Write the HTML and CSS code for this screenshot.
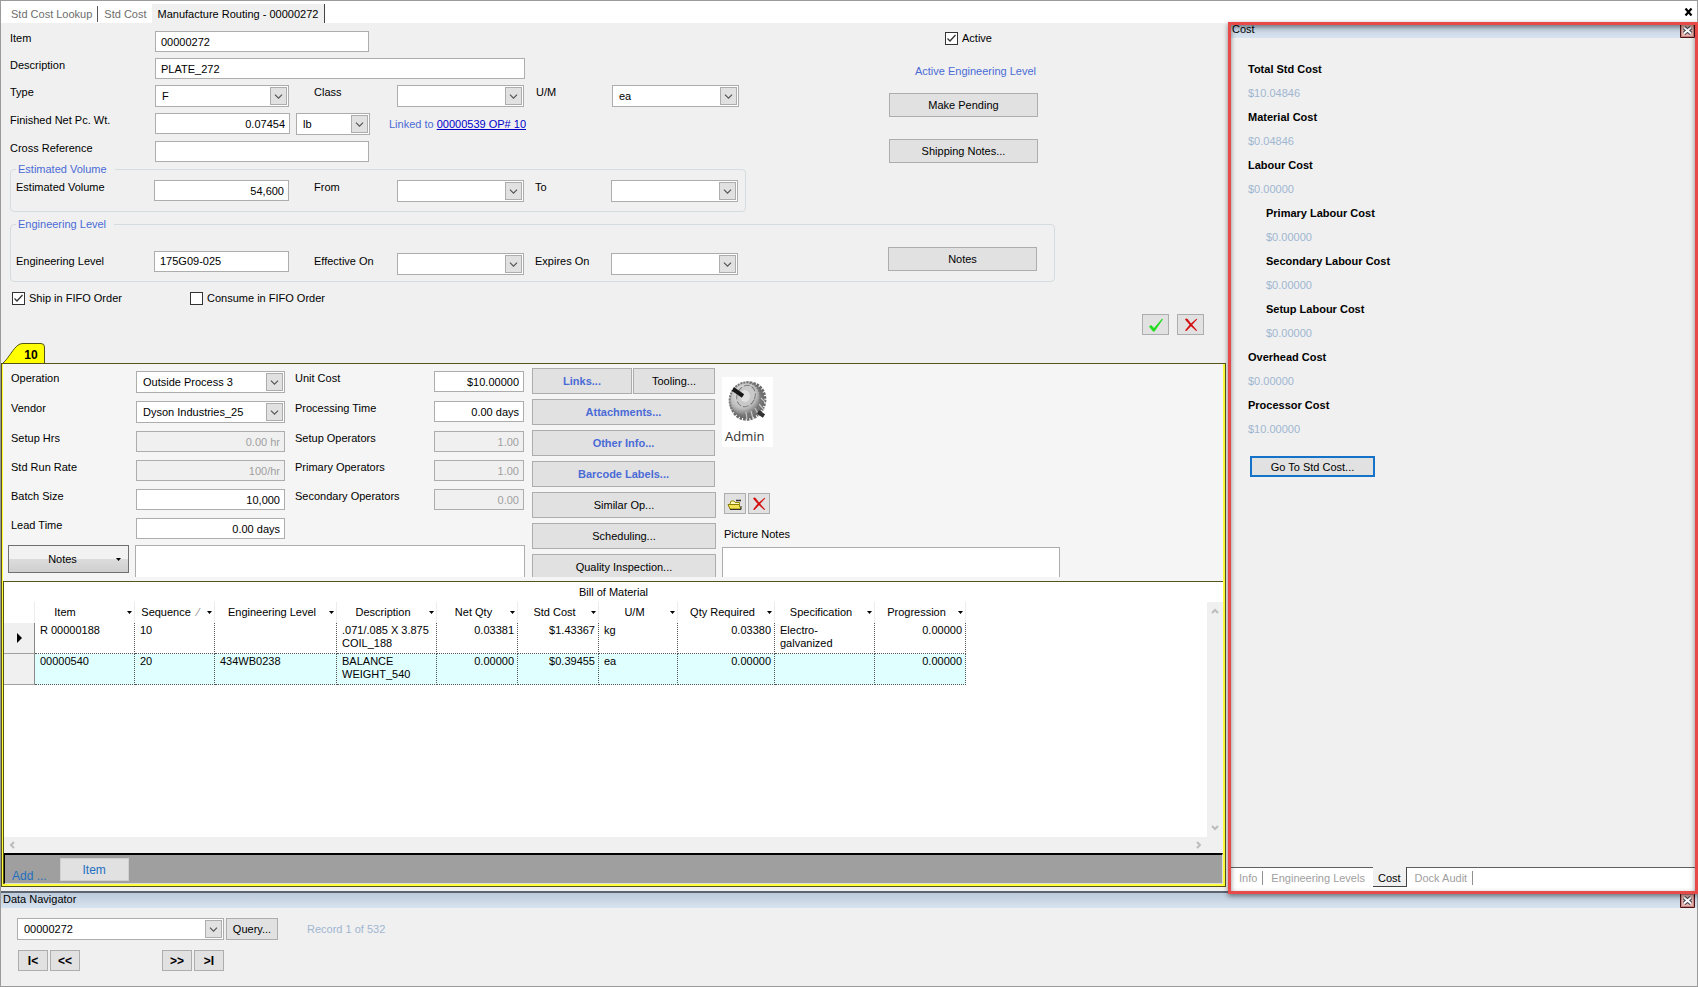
FILE: index.html
```html
<!DOCTYPE html>
<html lang="en">
<head>
<meta charset="utf-8">
<title>Manufacture Routing - 00000272</title>
<link rel="stylesheet" href="styles.css">
</head>
<body>
<svg class="defs" aria-hidden="true">
  <symbol id="chevron" viewBox="0 0 17 18"><path d="M4.500 7.500l4 4 4-4" fill="none" stroke="#505050" stroke-width="1.200"/></symbol>
  <symbol id="drop" viewBox="0 0 5 3"><path d="M0 0h5L2.500 3z" fill="#000"/></symbol>
  <symbol id="cross" viewBox="0 0 14 14"><path d="M1 1.500C2 .2 3 .3 4 1.500L7 5.500 12.500.8l.8.500L8.200 6.800l5 5.700-1 .5L7 8.200 2.500 13 1 12.500 5.600 6.800z" fill="#d40f0f"/></symbol>
  <symbol id="close" viewBox="0 0 15 15"><path d="M.5.5h14v14H.5z" fill="#e7b3ae" stroke="#4a1416"/><path d="M1.500 1.500h12v12h-12z" fill="none" stroke="#c9837e"/><path d="M4 4.500l7 6M11 4.500l-7 6" stroke="#3f4450" stroke-width="4.200"/><path d="M4 4.500l7 6M11 4.500l-7 6" stroke="#fff" stroke-width="2"/></symbol>
  <symbol id="scroll" viewBox="0 0 8 6"><path d="M1 5l3-3 3 3" fill="none" stroke="#bcbcbc" stroke-width="2"/></symbol>
</svg>
<div class="app">
  <header class="doc-tabs">
    <nav>
      <a href="#lookup">Std Cost Lookup</a>
      <a href="#std">Std Cost</a>
      <a href="#routing" class="current">Manufacture Routing - 00000272</a>
    </nav>
    <button class="doc-close" aria-label="Close"><svg width="9" height="8" viewBox="0 0 9 8"><path d="M1.500.5l6 7M7.500.5l-6 7" stroke="#000" stroke-width="2.200"/></svg></button>
  </header>

  <main class="workspace">
    <div class="routing">
      <form class="item-form">
        <div class="form-top">
          <div class="form-left">
            <div class="fields">
              <label for="item">Item</label><input id="item" class="w-mid" value="00000272">
              <label for="desc">Description</label><input id="desc" class="w-long" value="PLATE_272">
              <label for="type">Type</label><span class="combo w-type"><select id="type"><option>F</option></select><svg><use href="#chevron"/></svg></span>
              <label for="class">Class</label><span class="combo w-date"><select id="class"><option></option></select><svg><use href="#chevron"/></svg></span>
              <label for="um">U/M</label><span class="combo w-date"><select id="um"><option>ea</option></select><svg><use href="#chevron"/></svg></span>
              <label for="wt">Finished Net Pc. Wt.</label>
              <div class="weight"><input id="wt" class="num w-short" value="0.07454"><span class="combo w-unit"><select aria-label="Weight unit"><option>lb</option></select><svg><use href="#chevron"/></svg></span><span class="linked">Linked to <a href="#op">00000539 OP# 10</a></span></div>
              <label for="xref">Cross Reference</label><input id="xref" class="w-mid">
            </div>
            <fieldset class="volume">
              <legend>Estimated Volume</legend>
              <div class="group">
                <label for="vol">Estimated Volume</label><input id="vol" class="num w-short" value="54,600">
                <label for="from">From</label><span class="combo w-date"><select id="from"><option></option></select><svg><use href="#chevron"/></svg></span>
                <label for="to">To</label><span class="combo w-date"><select id="to"><option></option></select><svg><use href="#chevron"/></svg></span>
              </div>
            </fieldset>
          </div>
          <div class="form-actions">
            <label class="check centered"><input type="checkbox" checked>Active</label>
            <span class="level">Active Engineering Level</span>
            <button type="button">Make Pending</button>
            <button type="button">Shipping Notes...</button>
          </div>
        </div>
        <fieldset class="engineering">
          <legend>Engineering Level</legend>
          <div class="group">
            <label for="eng">Engineering Level</label><input id="eng" class="w-short" value="175G09-025">
            <label for="eff">Effective On</label><span class="combo w-date"><select id="eff"><option></option></select><svg><use href="#chevron"/></svg></span>
            <label for="exp">Expires On</label><span class="combo w-date"><select id="exp"><option></option></select><svg><use href="#chevron"/></svg></span>
            <button type="button">Notes</button>
          </div>
        </fieldset>
        <div class="fifo">
          <label class="check"><input type="checkbox" checked>Ship in FIFO Order</label>
          <label class="check"><input type="checkbox">Consume in FIFO Order</label>
        </div>
        <div class="confirm">
          <button type="button" aria-label="Save"><svg width="16" height="14" viewBox="0 0 16 14"><path d="M1 8.500l2-1.500L6 10 14 .8l1 .4L6.500 13.500H5z" fill="#1fdc1f"/></svg></button>
          <button type="button" aria-label="Cancel"><svg width="14" height="14"><use href="#cross"/></svg></button>
        </div>
      </form>

      <div class="op-tabs">
        <button class="op-tab"><svg width="42" height="20" viewBox="0 0 42 20"><path d="M0 20C6 15 10 5 16 1.500Q18 .5 20 .5h18Q41.500.5 41.500 4v16" fill="#ffff00" stroke="#55551a"/></svg><span>10</span></button>
      </div>

      <section class="op-panel">
        <div class="op-body">
          <div class="op-main">
            <div class="op-fields">
              <label for="op">Operation</label><span class="combo"><select id="op"><option>Outside Process 3</option></select><svg><use href="#chevron"/></svg></span>
              <label for="cost">Unit Cost</label><input id="cost" class="num" value="$10.00000">
              <label for="vendor">Vendor</label><span class="combo"><select id="vendor"><option>Dyson Industries_25</option></select><svg><use href="#chevron"/></svg></span>
              <label for="ptime">Processing Time</label><input id="ptime" class="num" value="0.00 days">
              <label for="setup">Setup Hrs</label><input id="setup" class="num" value="0.00 hr" disabled>
              <label for="sops">Setup Operators</label><input id="sops" class="num" value="1.00" disabled>
              <label for="rate">Std Run Rate</label><input id="rate" class="num" value="100/hr" disabled>
              <label for="pops">Primary Operators</label><input id="pops" class="num" value="1.00" disabled>
              <label for="batch">Batch Size</label><input id="batch" class="num" value="10,000">
              <label for="secops">Secondary Operators</label><input id="secops" class="num" value="0.00" disabled>
              <label for="lead">Lead Time</label><input id="lead" class="num" value="0.00 days">
            </div>
            <div class="op-notes">
              <button class="notes-btn"><span>Notes</span><svg width="5" height="3"><use href="#drop"/></svg></button>
              <textarea aria-label="Notes"></textarea>
            </div>
          </div>
          <div class="op-buttons">
            <div class="pair"><button class="strong">Links...</button><button>Tooling...</button></div>
            <button class="strong">Attachments...</button>
            <button class="strong">Other Info...</button>
            <button class="strong">Barcode Labels...</button>
            <button>Similar Op...</button>
            <button>Scheduling...</button>
            <button>Quality Inspection...</button>
          </div>
          <div class="op-picture">
            <figure>
              <svg width="45" height="46" viewBox="0 0 45 46">
                <defs><radialGradient id="metal" cx=".4" cy=".4" r=".7"><stop offset="0" stop-color="#f4f4f4"/><stop offset=".6" stop-color="#bdbdbd"/><stop offset="1" stop-color="#5a5a5a"/></radialGradient></defs>
                <ellipse cx="23" cy="23" rx="16" ry="18" fill="#777" stroke="#6a6a6a" stroke-width="4" stroke-dasharray="2.500 1" transform="rotate(25 23 23)"/>
                <ellipse cx="20" cy="21" rx="15" ry="17" fill="url(#metal)" stroke="#777" stroke-width="2" stroke-dasharray="2 1" transform="rotate(25 20 21)"/>
                <path d="M30 30l4 8M26 33l2 8M34 26l5 6M21 34l1 7M36 20l4 4" stroke="#c4c4c4" stroke-width="1.200"/>
                <ellipse cx="21" cy="18" rx="9" ry="11" fill="#c9c9c9" stroke="#7b7b7b" stroke-dasharray="6 2" transform="rotate(25 21 18)"/>
                <ellipse cx="20" cy="18" rx="5" ry="6" fill="#e0e0e0"/>
                <path d="M8 11l10 7" stroke="#171717" stroke-width="4"/><path d="M33 34l6 4" stroke="#333" stroke-width="4"/>
              </svg>
              <figcaption>Admin</figcaption>
            </figure>
            <div class="picture-tools">
              <button aria-label="Open picture"><svg width="16" height="14" viewBox="0 0 16 14"><path d="M3 7l1-3h3l1 1.500h4.500V8" fill="#fffbc0" stroke="#9a8a00"/><path d="M9 3.500h5" stroke="#333" stroke-width="1.500"/><path d="M1 7.500h11l2 4.500H3z" fill="#f3e254" stroke="#8a7c00"/><path d="M3 12.500h11V9" fill="none" stroke="#333"/></svg></button>
              <button aria-label="Delete picture"><svg width="14" height="14"><use href="#cross"/></svg></button>
            </div>
            <label for="pnotes">Picture Notes</label>
            <textarea id="pnotes"></textarea>
          </div>
        </div>

        <div class="bom">
          <h2>Bill of Material</h2>
          <div class="grid-area">
            <div class="grid-scroll">
              <table>
                <colgroup><col class="c-mark"><col class="c-100"><col class="c-80"><col class="c-122"><col class="c-100"><col class="c-81"><col class="c-81"><col class="c-79"><col class="c-97"><col class="c-100"><col class="c-91"></colgroup>
                <thead><tr>
                  <th class="mark"></th>
                  <th><div class="item-head"><span>Item</span><svg><use href="#drop"/></svg></div></th>
                  <th><div><span>Sequence</span><i>⁄</i><svg><use href="#drop"/></svg></div></th>
                  <th><div><span>Engineering Level</span><svg><use href="#drop"/></svg></div></th>
                  <th><div><span>Description</span><svg><use href="#drop"/></svg></div></th>
                  <th><div><span>Net Qty</span><svg><use href="#drop"/></svg></div></th>
                  <th><div><span>Std Cost</span><svg><use href="#drop"/></svg></div></th>
                  <th><div><span>U/M</span><svg><use href="#drop"/></svg></div></th>
                  <th><div><span>Qty Required</span><svg><use href="#drop"/></svg></div></th>
                  <th><div><span>Specification</span><svg><use href="#drop"/></svg></div></th>
                  <th><div><span>Progression</span><svg><use href="#drop"/></svg></div></th>
                </tr></thead>
                <tbody>
                  <tr><td class="mark"><svg width="5" height="10" viewBox="0 0 5 10"><path d="M0 0l5 5-5 5z"/></svg></td><td>R 00000188</td><td>10</td><td></td><td>.071/.085 X 3.875 COIL_188</td><td class="r">0.03381</td><td class="r">$1.43367</td><td>kg</td><td class="r">0.03380</td><td>Electro-<br>galvanized</td><td class="r">0.00000</td></tr>
                  <tr class="alt"><td class="mark"></td><td>00000540</td><td>20</td><td>434WB0238</td><td>BALANCE WEIGHT_540</td><td class="r">0.00000</td><td class="r">$0.39455</td><td>ea</td><td class="r">0.00000</td><td></td><td class="r">0.00000</td></tr>
                </tbody>
              </table>
            </div>
            <div class="vbar"><svg><use href="#scroll"/></svg><svg class="down"><use href="#scroll"/></svg></div>
            <div class="hbar"><svg class="left"><use href="#scroll"/></svg><svg class="right"><use href="#scroll"/></svg></div>
          </div>
          <div class="add-bar"><span>Add ...</span><button>Item</button></div>
        </div>
      </section>
    </div>

    <aside class="cost">
      <div class="title-bar"><span>Cost</span><button aria-label="Close Cost"><svg width="15" height="15"><use href="#close"/></svg></button></div>
      <div class="cost-body">
        <dl>
          <dt>Total Std Cost</dt><dd>$10.04846</dd>
          <dt>Material Cost</dt><dd>$0.04846</dd>
          <dt>Labour Cost</dt><dd>$0.00000</dd>
          <dt class="sub">Primary Labour Cost</dt><dd class="sub">$0.00000</dd>
          <dt class="sub">Secondary Labour Cost</dt><dd class="sub">$0.00000</dd>
          <dt class="sub">Setup Labour Cost</dt><dd class="sub">$0.00000</dd>
          <dt>Overhead Cost</dt><dd>$0.00000</dd>
          <dt>Processor Cost</dt><dd>$10.00000</dd>
        </dl>
        <button class="focus">Go To Std Cost...</button>
      </div>
      <nav class="side-tabs">
        <a href="#info">Info</a><a href="#levels" class="before">Engineering Levels</a><a href="#cost" class="current">Cost</a><a href="#dock">Dock Audit</a><span class="rest"></span>
      </nav>
      <div class="highlight"></div>
    </aside>
  </main>

  <footer class="navigator">
    <div class="title-bar"><span>Data Navigator</span><button aria-label="Close Data Navigator"><svg width="15" height="15"><use href="#close"/></svg></button></div>
    <div class="query">
      <span class="combo"><select aria-label="Record"><option>00000272</option></select><svg><use href="#chevron"/></svg></span>
      <button>Query...</button>
      <span class="record">Record 1 of 532</span>
    </div>
    <div class="steps">
      <div><button>I&lt;</button><button>&lt;&lt;</button></div>
      <div><button>&gt;&gt;</button><button>&gt;I</button></div>
    </div>
  </footer>
</div>
</body>
</html>
```
FILE: styles.css
```css
* { box-sizing: border-box; }
body { margin: 0; font: 11px/14px "Liberation Sans", Arial, sans-serif; color: #000; background: #f0f0f0; }
.defs { display: none; }
a { color: inherit; text-decoration: none; }
h2, dl, dd, figure { margin: 0; }
button, input, select, textarea { font: inherit; color: inherit; margin: 0; border-radius: 0; }
button { padding: 0; background: #e1e1e1; border: 1px solid #adadad; white-space: nowrap; }
button svg { display: block; margin: auto; }
input, textarea { border: 1px solid #adadad; background: #fff; height: 21px; padding: 0 5px; min-width: 0; }
textarea { resize: none; display: block; }
input:disabled { background: #f0f0f0; color: #a0a0a0; }
label { white-space: nowrap; }
.num { text-align: right; padding-right: 4px; }
.combo { display: grid; height: 22px; border: 1px solid #adadad; background: #fff; }
.combo > * { grid-area: 1 / 1; }
.combo select { appearance: none; border: 0; background: transparent; padding: 0 18px 0 6px; width: 100%; min-width: 0; }
.combo svg { width: 17px; height: 18px; margin: 1px; justify-self: end; background: #e1e1e1; border: 1px solid #adadad; pointer-events: none; }
.w-short { width: 135px; }
.w-type { width: 134px; }
.w-mid { width: 214px; }
.w-long { width: 370px; }
.w-date { width: 127px; }
.w-unit { width: 74px; }

.app { min-height: 100vh; display: flex; flex-direction: column; border: 1px solid #9b9b9b; }

/* document tabs */
.doc-tabs { display: flex; justify-content: space-between; align-items: center; height: 22px; background: #fff; color: #6d6d6d; }
.doc-tabs nav { display: flex; align-items: center; align-self: stretch; padding: 3px 0 0 4px; }
.doc-tabs a { padding: 1px 5px 1px 6px; }
.doc-tabs a:first-child { border-right: 1px solid #555; }
.doc-tabs a.current { display: flex; align-items: center; align-self: stretch; padding: 1px 6px; background: #f0f0f0; color: #000; border-right: 1px solid #444; }
.doc-close { background: none; border: 0; padding: 4px; }

.workspace { flex: 1; display: flex; }
.routing { flex: 1; min-width: 0; display: flex; flex-direction: column; padding: 0 2px 4px 0; }

/* item form */
.item-form { padding: 8px 0 8px 9px; }
.form-top { display: flex; gap: 143px; }
.fields { display: grid; grid-template-columns: 145px 159px 83px 139px 76px 127px; row-gap: 6px; align-items: start; }
.fields > .w-mid, .fields > .w-long, .weight { grid-column: 2 / -1; }
.weight { display: flex; gap: 6px; }
.linked { color: #4a6bd6; padding-left: 13px; align-self: center; }
.linked a { color: #0000cc; text-decoration: underline; }
fieldset { margin: 0; min-width: 0; border: 1px solid #d5dcdf; border-radius: 4px; }
legend { padding: 0 8px 0 2px; color: #4a6bd6; }
.group { display: grid; grid-template-columns: 138px 160px 83px 138px 76px 127px; align-items: start; }
.volume { width: 736px; padding: 4px 5px 9px; }
.engineering { width: 1045px; margin-top: 5px; padding: 16px 5px 6px; }
.engineering .group { grid-template-columns: 138px 160px 83px 138px 76px 277px 149px; align-items: center; }
.engineering .combo { margin-top: 6px; }
.engineering button { height: 24px; align-self: start; }
.form-actions { display: flex; flex-direction: column; width: 149px; }
.form-actions button { height: 24px; margin-top: 22px; }
.form-actions .level { color: #4a6bd6; text-align: right; padding-right: 2px; margin-top: 19px; }
.form-actions .level + button { margin-top: 15px; }
.check { display: flex; align-items: center; gap: 4px; height: 14px; }
.check input { appearance: none; width: 13px; height: 13px; border: 1px solid #333; padding: 0; }
.check input:checked { background: #fff url("data:image/svg+xml,%3Csvg xmlns='http://www.w3.org/2000/svg' viewBox='0 0 11 11'%3E%3Cpath d='M1.500 5.500l2.500 2.500 5.500-6' fill='none' stroke='%23333' stroke-width='1.300'/%3E%3C/svg%3E"); }
.centered { align-self: center; padding-left: 10px; }
.fifo { display: flex; margin: 9px 0 0 2px; }
.fifo .check:first-child { width: 178px; }
.confirm { display: flex; justify-content: flex-end; gap: 8px; margin: 9px 22px 0 0; }
.confirm button { width: 27px; height: 21px; }

/* operation tab */
.op-tabs { padding-left: 2px; height: 20px; }
.op-tab { display: grid; background: none; border: 0; font-size: 12px; font-weight: bold; }
.op-tab > * { grid-area: 1 / 1; }
.op-tab span { align-self: center; padding: 4px 0 0 14px; }
.op-panel { flex: 1; display: flex; flex-direction: column; border: 1px solid #55551a; background: #ffff3c; padding: 0 2px 2px 1px; }
.op-body { display: flex; gap: 6px; height: 217px; overflow: hidden; padding: 4px 0 0 5px; background: #f5f5f5; border-bottom: 4px solid #f5f5f5; }
.op-main { width: 518px; flex: none; padding-top: 3px; }
.op-fields { display: grid; grid-template-columns: 125px 149px 149px 90px; gap: 8px 0; align-items: start; padding-left: 3px; }
.op-fields label:nth-child(4n + 3) { padding-left: 10px; }
.op-fields input { width: 100%; }
.op-notes { display: flex; gap: 6px; margin: 6px 1px 0 0; }
.op-notes textarea { flex: 1; height: 44px; }
.notes-btn { display: flex; align-items: center; width: 121px; height: 28px; padding-right: 7px; border-color: #707070; background: linear-gradient(#f2f2f2 0 50%, #dcdcdc 50%, #cfcfcf); }
.notes-btn span { flex: 1; }
.notes-btn svg { margin: 0; }
.op-buttons { display: flex; flex-direction: column; gap: 5px; width: 184px; flex: none; }
.op-buttons button { height: 26px; flex: none; }
.op-buttons > .strong { width: 183px; }
.pair { display: grid; grid-template-columns: 100px 82px; gap: 1px; }
.strong { color: #4a6bd6; font-weight: bold; }
.op-picture { width: 338px; padding-top: 9px; }
.op-picture figure { width: 51px; height: 70px; padding: 1px 3px; background: #fff; color: #333; }
.op-picture figure svg { display: block; }
.op-picture figcaption { font: 13px/24px "Open Sans", "Noto Sans", sans-serif; }
.picture-tools { display: flex; gap: 2px; margin: 46px 0 13px 2px; }
.picture-tools button { width: 22px; height: 21px; }
.op-picture label { display: block; padding-left: 2px; }
.op-picture textarea { width: 100%; height: 44px; margin-top: 6px; }

/* bill of material */
.bom { flex: 1; display: flex; flex-direction: column; background: #fff; border: solid #55551a; border-width: 1px 0 0 1px; }
.bom h2 { font: inherit; text-align: center; line-height: 20px; }
.grid-area { flex: 1; display: grid; grid-template: 1fr 16px / 1fr 16px; }
.grid-scroll { overflow: hidden; }
table { table-layout: fixed; width: 962px; border-collapse: separate; border-spacing: 0; line-height: 13px; }
.c-mark { width: 31px; }
.c-79 { width: 79px; }
.c-80 { width: 80px; }
.c-81 { width: 81px; }
.c-91 { width: 91px; }
.c-97 { width: 97px; }
.c-100 { width: 100px; }
.c-122 { width: 122px; }
th { font-weight: normal; height: 21px; padding: 0; border-right: 1px solid #ececec; white-space: nowrap; }
th div { display: flex; align-items: center; padding: 0 2px 0 0; }
th span { flex: 1; }
th i { color: #888; font-style: normal; padding-right: 8px; }
th svg { width: 5px; height: 3px; }
.item-head span { padding-right: 32px; }
td { height: 31px; padding: 1px 4px 1px 5px; vertical-align: top; border-right: 1px dotted #555; border-bottom: 1px dotted #555; }
td.r { text-align: right; padding-right: 3px; }
td.mark { background: #f0f0f0; border-right: 1px solid #8a8a8a; border-bottom: 1px solid #a0a0a0; vertical-align: middle; }
td.mark svg { display: block; margin-left: 8px; }
.alt td { background: #e0ffff; }
.alt td.mark { background: #f0f0f0; }
.vbar { display: flex; flex-direction: column; justify-content: space-between; align-items: center; background: #f0f0f0; padding: 6px 0; }
.vbar svg, .hbar svg { width: 8px; height: 6px; }
.down { transform: rotate(180deg); }
.hbar { grid-column: 1 / -1; display: flex; justify-content: space-between; align-items: center; background: #f0f0f0; padding: 0 20px 0 4px; }
.left { transform: rotate(-90deg); }
.right { transform: rotate(90deg); }
.add-bar { display: flex; gap: 13px; height: 31px; padding: 3px 0 0 7px; background: #9f9f9f; border: 1px solid #ddd; border-top: 2px solid #000; border-left: 1px solid #000; color: #1f6fc0; font-size: 12px; }
.add-bar span { align-self: flex-end; }
.add-bar button { width: 69px; height: 23px; border-color: #d0d0d0; }

/* tool windows */
.title-bar { display: flex; justify-content: space-between; height: 15px; padding: 0 2px; line-height: 13px; background: linear-gradient(#bccada, #d8e3f0); }
.title-bar button { border: 0; background: none; }
.cost { position: relative; width: 469px; display: flex; flex-direction: column; padding-left: 3px; }
.cost .title-bar { padding-left: 1px; }
.cost-body { flex: 1; padding: 19px 17px; }
.cost dt, .cost dd { line-height: 24px; }
.cost dt { font-weight: bold; }
.cost dd { color: #9fb6d0; }
.cost .sub { padding-left: 18px; }
.focus { width: 125px; height: 21px; margin: 15px 2px; border: 2px solid #1473c8; }
.side-tabs { display: flex; height: 24px; padding-bottom: 4px; background: #fff; color: #a0a0a0; }
.side-tabs a, .rest { border-top: 1px solid #606060; }
.side-tabs a { padding: 3px 5px 0; line-height: 14px; }
.side-tabs a:first-child { padding: 3px 6px 0 8px; }
.side-tabs .before { padding: 3px 8px 0; }
.side-tabs a:not(.before):not(.current) { background: linear-gradient(#909090, #909090) right 3px / 1px 14px no-repeat; }
.side-tabs a:nth-child(4) { padding: 3px 6px 0 8px; }
.side-tabs a.current { border: solid #444; border-width: 0 1px 1px 0; padding-top: 4px; background: #f0f0f0; color: #000; }
.rest { flex: 1; }
.highlight { position: absolute; inset: -1px -1px -3px 0; border: 3px solid #e84a4a; box-shadow: 0 2px 5px rgba(0, 0, 0, .45), inset 0 2px 5px rgba(0, 0, 0, .45); pointer-events: none; }

/* record navigator */
.navigator { border-top: 2px solid #5c6470; padding-bottom: 15px; }
.query { display: flex; align-items: center; gap: 2px; padding: 10px 0 0 16px; }
.query .combo { width: 207px; }
.query button { width: 52px; height: 22px; }
.record { color: #9fb6d0; padding-left: 27px; }
.steps { display: flex; gap: 82px; padding: 10px 0 0 17px; }
.steps div { display: flex; gap: 2px; }
.steps button { width: 30px; height: 21px; font-size: 12px; font-weight: bold; }
```
